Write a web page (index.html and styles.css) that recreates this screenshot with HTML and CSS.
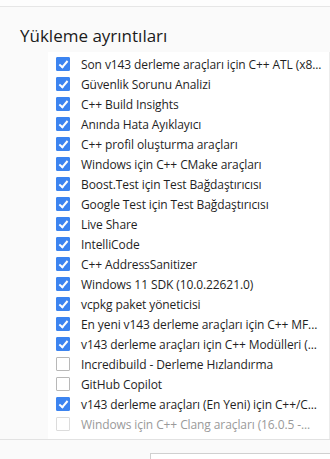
FILE: index.html
```html
<!DOCTYPE html>
<html lang="tr">
<head>
    <meta charset="UTF-8">
    <meta name="viewport" content="width=device-width, initial-scale=1.0">
    <title>Yükleme ayrıntıları</title>
    <link rel="stylesheet" href="styles.css">
</head>
<body>
    <div class="topLine"></div>

    <h2 class="title">Yükleme ayrıntıları</h2>

    <ul class="list">
        <li class="row"><span class="box on"></span><span class="label">Son v143 derleme araçları için C++ ATL (x8...</span></li>
        <li class="row"><span class="box on"></span><span class="label">Güvenlik Sorunu Analizi</span></li>
        <li class="row"><span class="box on"></span><span class="label">C++ Build Insights</span></li>
        <li class="row"><span class="box on"></span><span class="label">Anında Hata Ayıklayıcı</span></li>
        <li class="row"><span class="box on"></span><span class="label">C++ profil oluşturma araçları</span></li>
        <li class="row"><span class="box on"></span><span class="label">Windows için C++ CMake araçları</span></li>
        <li class="row"><span class="box on"></span><span class="label">Boost.Test için Test Bağdaştırıcısı</span></li>
        <li class="row"><span class="box on"></span><span class="label">Google Test için Test Bağdaştırıcısı</span></li>
        <li class="row"><span class="box on"></span><span class="label">Live Share</span></li>
        <li class="row"><span class="box on"></span><span class="label">IntelliCode</span></li>
        <li class="row"><span class="box on"></span><span class="label">C++ AddressSanitizer</span></li>
        <li class="row"><span class="box on"></span><span class="label">Windows 11 SDK (10.0.22621.0)</span></li>
        <li class="row"><span class="box on"></span><span class="label">vcpkg paket yöneticisi</span></li>
        <li class="row"><span class="box on"></span><span class="label">En yeni v143 derleme araçları için C++ MF...</span></li>
        <li class="row"><span class="box on"></span><span class="label">v143 derleme araçları için C++ Modülleri (...</span></li>
        <li class="row"><span class="box"></span><span class="label">Incredibuild - Derleme Hızlandırma</span></li>
        <li class="row"><span class="box"></span><span class="label">GitHub Copilot</span></li>
        <li class="row"><span class="box on"></span><span class="label">v143 derleme araçları (En Yeni) için C++/C...</span></li>
        <li class="row disabled"><span class="box"></span><span class="label">Windows için C++ Clang araçları (16.0.5 -...</span></li>
    </ul>

    <footer class="bottom">
        <div class="field"></div>
    </footer>
</body>
</html>
```

FILE: styles.css
```css
body{
    margin: 0;
    width: 330px;
    height: 459px;
    overflow: hidden;
    background: #fafafa;
    font-family: "Open Sans", "Noto Sans", sans-serif;
    color: #1f1f1f;
}
.topLine{
    height: 6px;
    border-bottom: 1px solid #e6e6e6;
    background: #fdfdfd;
}
.title{
    margin: 15px 0 2px 20px;
    height: 28px;
    font-size: 17px;
    font-weight: 400;
    line-height: 28px;
    color: #1b1b1b;
}
.list{
    list-style: none;
    margin: 0 0 0 48px;
    padding: 2px 0 0 0;
    height: 387px;
    overflow: hidden;
    background: #ffffff;
    border-right: 1px solid #ececec;
    box-sizing: border-box;
}
.row{
    height: 20px;
    display: flex;
    align-items: center;
}
.box{
    flex: none;
    width: 12px;
    height: 12px;
    margin-left: 8px;
    margin-right: 11px;
    border: 1px solid #b8b8b8;
    border-radius: 1px;
    background: #fff;
    position: relative;
}
.box.on{
    border-color: #3c84f0;
    background: #3c84f0;
}
.box.on::after{
    content: "";
    position: absolute;
    left: 4px;
    top: 1px;
    width: 3px;
    height: 7px;
    border: solid #fff;
    border-width: 0 2px 2px 0;
    transform: rotate(40deg);
}
.label{
    font-size: 12px;
    letter-spacing: -0.1px;
    white-space: nowrap;
}
.disabled .box{
    border-color: #dcdcdc;
}
.disabled .label{
    color: #9a9a9a;
}
.bottom{
    border-top: 1px solid #e2e2e2;
    height: 40px;
}
.field{
    margin: 13px 0 0 150px;
    height: 20px;
    border: 1px solid #d0d0d0;
    border-right: none;
    background: #fff;
}
```
